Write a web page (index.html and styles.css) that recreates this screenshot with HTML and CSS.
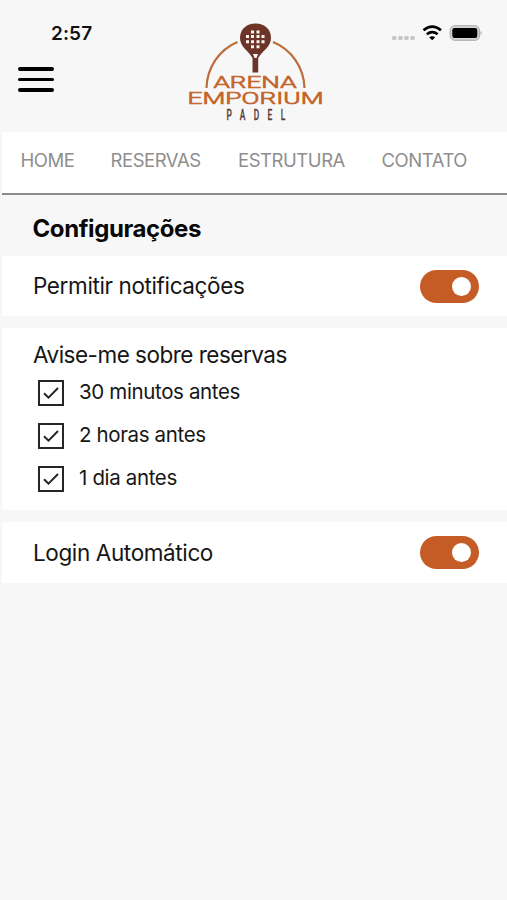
FILE: index.html
```html
<!DOCTYPE html>
<html lang="pt-BR">
<head>
<meta charset="utf-8">
<title>Configurações</title>
<link rel="stylesheet" href="styles.css">
</head>
<body>
<header class="header">
  <div class="left">
    <span class="time">2:57</span>
    <div class="menu"><i></i><i></i><i></i></div>
  </div>
  <svg class="logo" width="150" height="110" viewBox="180 15 150 110">
    <path d="M206.500 88 A49.500 51 0 0 1 237.500 42 M273 42 A49.500 51 0 0 1 304.500 88" fill="none" stroke="#bb6c3c" stroke-width="2.200"/>
    <path d="M255.500 23.500C246.500 23.500 240 29 240 38C240 47 248 50 252.500 58V72.500H258.200V58C263 50 271 47 271 38C271 29 264.500 23.500 255.500 23.500Z" fill="#6c3527"/>
    <path d="M253 54h5l-1.500 4h-2z" fill="#f7f7f7"/>
    <g fill="#fff6ef">
      <path d="M251 30.500h3v3h-3zM256.500 30.500h3v3h-3zM246 35h3v3h-3zM251 35h3v3h-3zM256.500 35h3v3h-3zM261.500 35h3v3h-3zM246 40.200h3v3h-3zM251 40.200h3v3h-3zM256.500 40.200h3v3h-3zM261.500 40.200h3v3h-3zM251 45.300h3v3h-3zM256.500 45.300h3v3h-3z"/>
    </g>
    <text class="brand" x="213.500" y="88.300" textLength="83" lengthAdjust="spacingAndGlyphs">ARENA</text>
    <text class="brand" x="187.500" y="104" textLength="136" lengthAdjust="spacingAndGlyphs">EMPORIUM</text>
    <g transform="translate(226.500 119.500) scale(.6 1)"><text class="sub" x="0" y="0" textLength="98">PADEL</text></g>
  </svg>
  <svg class="status" width="94" height="20" viewBox="390 23 94 20">
    <g fill="#c6c6c8"><rect x="392" y="36" width="4.500" height="4" rx="1.500"/><rect x="398.200" y="36" width="4.500" height="4" rx="1.500"/><rect x="404.200" y="36" width="4.500" height="4" rx="1.500"/><rect x="410.300" y="36" width="4.500" height="4" rx="1.500"/></g>
    <path d="M423.500 30.300Q432.200 22.800 441 30.300M426.800 34.300Q432.200 30 437.700 34.300" fill="none" stroke="#000" stroke-width="2.700"/>
    <path d="M432.200 40.300L429.200 37.300Q432.200 35 435.200 37.300Z"/>
    <rect x="450.200" y="25.700" width="29.300" height="14.600" rx="4.500" fill="#d5d5d5" stroke="#ababab"/>
    <rect x="452.300" y="28" width="25" height="10" rx="2.200"/>
    <path d="M480.500 30.800q2.300 2.200 0 4.600z" fill="#aaa"/>
  </svg>
</header>
<main class="content">
  <nav class="nav"><a class="n1">HOME</a><a class="n2">RESERVAS</a><a class="n3">ESTRUTURA</a><a class="n4">CONTATO</a></nav>
  <h1 class="title">Configurações</h1>
  <section class="row"><span class="label notify">Permitir notificações</span><span class="switch"></span></section>
  <section class="group">
    <h2 class="label warn">Avise-me sobre reservas</h2>
    <div class="option"><svg class="box" viewBox="0 0 26 26"><path d="M1 1h24v24H1z"/><path d="M6 13.200l4.500 4.500 9.500-9.700"/></svg><span>30 minutos antes</span></div>
    <div class="option"><svg class="box" viewBox="0 0 26 26"><path d="M1 1h24v24H1z"/><path d="M6 13.200l4.500 4.500 9.500-9.700"/></svg><span>2 horas antes</span></div>
    <div class="option"><svg class="box" viewBox="0 0 26 26"><path d="M1 1h24v24H1z"/><path d="M6 13.200l4.500 4.500 9.500-9.700"/></svg><span>1 dia antes</span></div>
  </section>
  <section class="row"><span class="label login">Login Automático</span><span class="switch"></span></section>
</main>
</body>
</html>
```

FILE: styles.css
```css
* { box-sizing: border-box; }
body { margin: 0; height: 900px; overflow: hidden; background: #f7f7f7; color: #161616; font-family: Inter, "Liberation Sans", sans-serif; }
.header { height: 132px; display: flex; align-items: flex-start; padding: 15px 23px 0 18px; }
.left { width: 162px; }
.time { display: block; margin: 8px 0 0 33px; font-size: 19px; line-height: 21px; font-weight: 600; letter-spacing: 0.1px; color: #111; }
.menu { display: flex; flex-direction: column; gap: 7px; margin-top: 23px; width: 36px; }
.menu i { height: 3.700px; border-radius: 2px; background: #000; }
.status { margin: 8px 0 0 auto; }
.brand { font: 300 16.500px Roboto, sans-serif; fill: #c4652b; stroke: #c4652b; stroke-width: .7px; }
.sub { font: 500 14px Roboto, sans-serif; fill: #5c4038; stroke: #5c4038; stroke-width: .3px; }
.content { margin-left: 2px; }
.nav { height: 63px; background: #fff; border-bottom: 2px solid #8b8b8b; display: flex; padding: 16px 0 0 18.500px; font-size: 18.500px; line-height: 24px; color: #8e8e8e; letter-spacing: -.45px; white-space: nowrap; }
.n1 { width: 90px; }
.n2 { width: 127.500px; }
.n3 { width: 143.500px; }
.title { margin: 0; height: 61px; padding: 19px 0 0 30.500px; font-size: 24px; line-height: 30px; font-weight: 700; letter-spacing: -.4px; color: #080808; }
.row { height: 60px; display: flex; align-items: center; justify-content: space-between; padding: 0 28px 0 31px; background: #fff; }
.row:last-child { height: 61px; }
.label { margin: 0; font-size: 22.500px; line-height: 28px; font-weight: 400; letter-spacing: -.38px; }
.warn { letter-spacing: -.5px; }
.switch { width: 59px; height: 33px; border-radius: 17px; background: #c65c25; padding: 7px 8px; display: flex; justify-content: flex-end; }
.switch::after { content: ""; width: 19px; height: 19px; border-radius: 50%; background: #fff; }
.group { height: 182px; margin: 12px 0; padding: 13px 0 0 31px; background: #fff; }
.option { height: 43px; display: flex; align-items: flex-start; padding: 11px 0 0 5px; gap: 15px; font-size: 20.500px; line-height: 24px; letter-spacing: -.36px; }
.option span { margin-top: 0; }
.box { width: 26px; height: 26px; fill: none; stroke: #262626; stroke-width: 2; }
```
